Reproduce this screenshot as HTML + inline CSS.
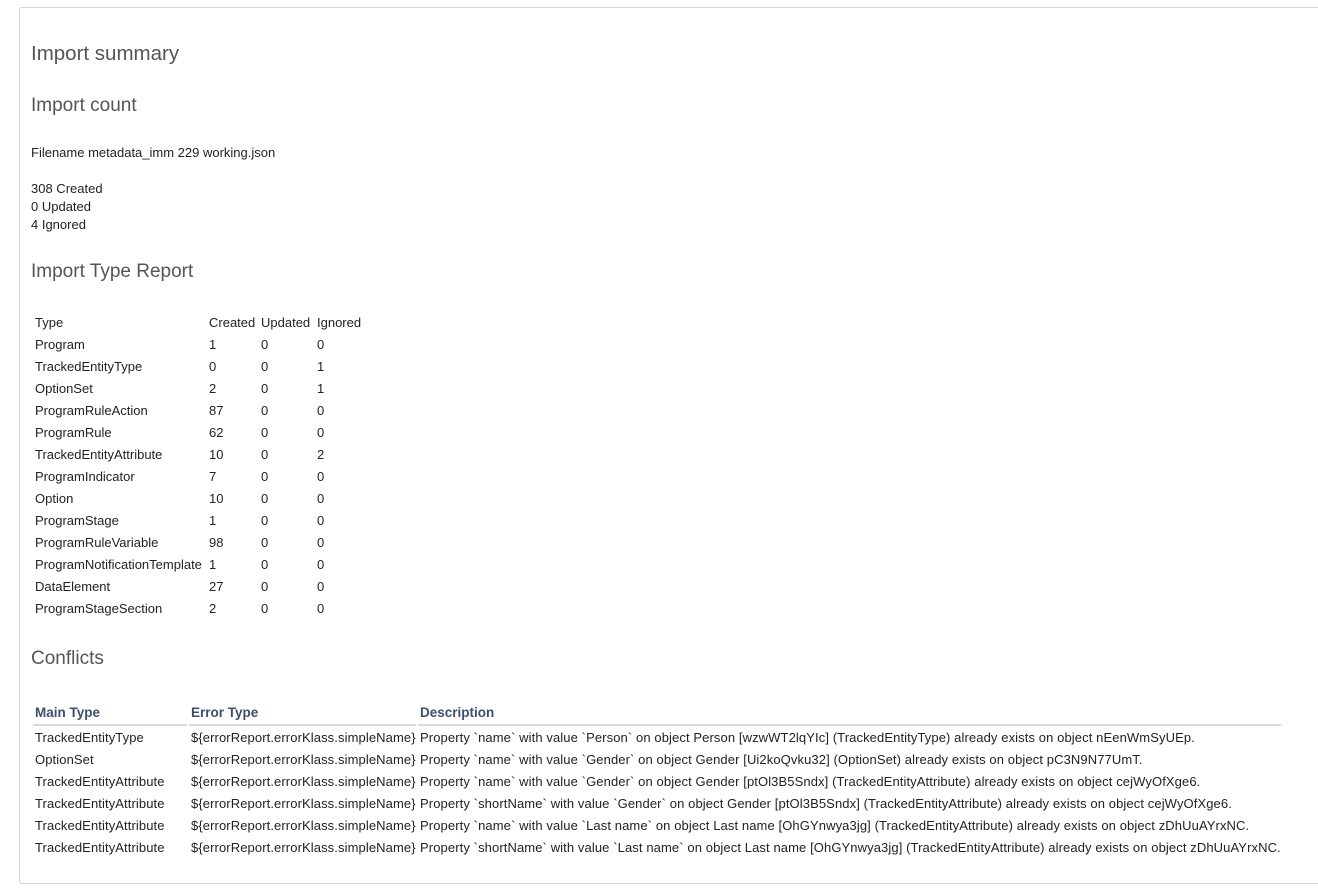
<!DOCTYPE html>
<html><head><meta charset="utf-8"><style>
body{margin:0;width:1318px;height:889px;background:#fff;font-family:"Liberation Sans",Arial,sans-serif;color:#222;font-size:13px;position:relative;overflow:hidden}
.panel{position:absolute;left:19px;top:7px;width:1320px;height:875px;border:1px solid #d4d4d4;border-radius:3px}
.a{position:absolute;white-space:nowrap}
h1,h2{margin:0;font-weight:normal;color:#555;position:absolute;left:31px;white-space:nowrap}
h1{font-size:20.5px}
h2{font-size:19px}
table{position:absolute;border-collapse:separate;border-spacing:2px 0;font-size:13px}
td{padding:0 0 0 2px;height:22px;white-space:nowrap}
.t1{left:31px;top:311px}
.t2{left:31px;top:700px}
.t2 td{letter-spacing:0.1px}
.t2 th{text-align:left;color:#3d4f70;font-weight:bold;font-size:13.5px;padding:0 0 0 2px;height:24px;border-bottom:2px solid #d5d9e2}
</style></head><body>
<div class="panel"></div>
<h1 style="top:42px">Import summary</h1>
<h2 style="top:95px">Import count</h2>
<div class="a" style="left:31px;top:145px">Filename metadata_imm 229 working.json</div>
<div class="a" style="left:31px;top:180px;line-height:18px">308 Created<br>0 Updated<br>4 Ignored</div>
<h2 style="top:261px">Import Type Report</h2>
<table class="t1">
<tr><td style="width:170px">Type</td><td style="width:48px">Created</td><td style="width:52px">Updated</td><td>Ignored</td></tr>
<tr><td>Program</td><td>1</td><td>0</td><td>0</td></tr>
<tr><td>TrackedEntityType</td><td>0</td><td>0</td><td>1</td></tr>
<tr><td>OptionSet</td><td>2</td><td>0</td><td>1</td></tr>
<tr><td>ProgramRuleAction</td><td>87</td><td>0</td><td>0</td></tr>
<tr><td>ProgramRule</td><td>62</td><td>0</td><td>0</td></tr>
<tr><td>TrackedEntityAttribute</td><td>10</td><td>0</td><td>2</td></tr>
<tr><td>ProgramIndicator</td><td>7</td><td>0</td><td>0</td></tr>
<tr><td>Option</td><td>10</td><td>0</td><td>0</td></tr>
<tr><td>ProgramStage</td><td>1</td><td>0</td><td>0</td></tr>
<tr><td>ProgramRuleVariable</td><td>98</td><td>0</td><td>0</td></tr>
<tr><td>ProgramNotificationTemplate</td><td>1</td><td>0</td><td>0</td></tr>
<tr><td>DataElement</td><td>27</td><td>0</td><td>0</td></tr>
<tr><td>ProgramStageSection</td><td>2</td><td>0</td><td>0</td></tr>
</table>
<h2 style="top:648px">Conflicts</h2>
<table class="t2" style="width:1252px">
<tr><th style="width:152px">Main Type</th><th style="width:225px">Error Type</th><th>Description</th></tr>
<tr><td>TrackedEntityType</td><td>${errorReport.errorKlass.simpleName}</td><td>Property `name` with value `Person` on object Person [wzwWT2lqYIc] (TrackedEntityType) already exists on object nEenWmSyUEp.</td></tr>
<tr><td>OptionSet</td><td>${errorReport.errorKlass.simpleName}</td><td>Property `name` with value `Gender` on object Gender [Ui2koQvku32] (OptionSet) already exists on object pC3N9N77UmT.</td></tr>
<tr><td>TrackedEntityAttribute</td><td>${errorReport.errorKlass.simpleName}</td><td>Property `name` with value `Gender` on object Gender [ptOl3B5Sndx] (TrackedEntityAttribute) already exists on object cejWyOfXge6.</td></tr>
<tr><td>TrackedEntityAttribute</td><td>${errorReport.errorKlass.simpleName}</td><td>Property `shortName` with value `Gender` on object Gender [ptOl3B5Sndx] (TrackedEntityAttribute) already exists on object cejWyOfXge6.</td></tr>
<tr><td>TrackedEntityAttribute</td><td>${errorReport.errorKlass.simpleName}</td><td>Property `name` with value `Last name` on object Last name [OhGYnwya3jg] (TrackedEntityAttribute) already exists on object zDhUuAYrxNC.</td></tr>
<tr><td>TrackedEntityAttribute</td><td>${errorReport.errorKlass.simpleName}</td><td>Property `shortName` with value `Last name` on object Last name [OhGYnwya3jg] (TrackedEntityAttribute) already exists on object zDhUuAYrxNC.</td></tr>
</table>
</body></html>
